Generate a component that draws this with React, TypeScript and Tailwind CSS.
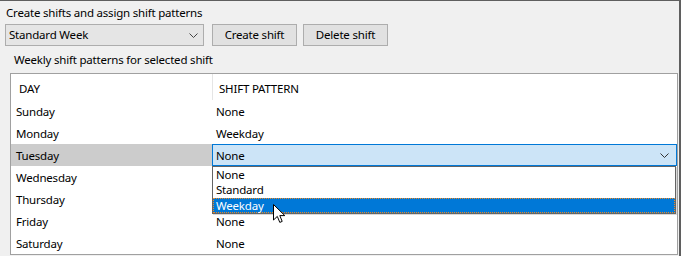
const days = [
  { day: 'Sunday', pattern: 'None' },
  { day: 'Monday', pattern: 'Weekday' },
  { day: 'Tuesday', pattern: 'None', editing: true },
  { day: 'Wednesday', pattern: '' },
  { day: 'Thursday', pattern: '' },
  { day: 'Friday', pattern: 'None' },
  { day: 'Saturday', pattern: 'None' },
]

const options = ['None', 'Standard', 'Weekday']

function Chevron({ color = '#444' }: { color?: string }) {
  return (
    <svg width="9" height="5" viewBox="0 0 9 5">
      <polyline points="0.5,0.5 4.5,4.5 8.5,0.5" fill="none" stroke={color} strokeWidth="1" />
    </svg>
  )
}

function Cursor() {
  return (
    <svg className="absolute left-[59px] top-[5px]" width="13" height="20" viewBox="0 0 13 20">
      <path
        d="M0.5 0.5 L0.5 16 L4.3 12.4 L6.8 18.4 L9.2 17.4 L6.8 11.6 L11.8 11.6 Z"
        fill="#fff"
        stroke="#000"
        strokeWidth="1"
      />
    </svg>
  )
}

export default function App() {
  return (
    <div className="w-[681px] h-[256px] overflow-hidden bg-[#f0f0f0] border-t border-r-2 border-[#5f5f5f] text-[11.5px] tracking-[-0.2px] text-black font-['Segoe_UI','Noto_Sans',sans-serif]">
      <div className="pl-[6px] pt-[3px] h-[23px] leading-[18px]">Create shifts and assign shift patterns</div>

      <div className="flex items-center pl-[5px] gap-[8px] h-[22px]">
        <div className="w-[199px] h-[22px] flex items-center justify-between pl-[3px] pr-[5px] bg-[#e5e5e5] border border-[#adadad]">
          <span>Standard Week</span>
          <Chevron />
        </div>
        <button className="w-[85px] h-[22px] bg-[#e1e1e1] border border-[#adadad] leading-none">Create shift</button>
        <button className="w-[85px] h-[22px] -ml-[2px] bg-[#e1e1e1] border border-[#adadad] leading-none">Delete shift</button>
      </div>

      <div className="pl-[14px] h-[27px] flex items-center pt-[1px]">Weekly shift patterns for selected shift</div>

      <div className="ml-[10px] w-[668px] border border-[#a0a0a0] bg-white">
        <div className="flex h-[26px] items-center">
          <div className="w-[201px] pl-[8px] pt-[3px]">DAY</div>
          <div className="flex-1 h-full flex items-center pl-[6px] pt-[3px] border-l border-[#e5e5e5]">SHIFT PATTERN</div>
        </div>
        {days.map((d) => (
          <div key={d.day} className="flex h-[22px] items-center">
            <div className={`w-[201px] h-full flex items-center pl-[5px] pt-[1px] ${d.editing ? 'bg-[#cccccc]' : ''}`}>
              {d.day}
            </div>
            {d.editing ? (
              <div className="relative flex-1 h-full">
                <div className="h-full flex items-center justify-between pl-[3px] pr-[7px] pt-[1px] bg-[#cce4f7] border border-[#0078d7]">
                  <span>{d.pattern}</span>
                  <Chevron color="#333" />
                </div>
                <div className="absolute left-0 right-[1px] top-[22px] z-10 bg-white border border-[#646464] shadow-[1px_1px_0_rgba(0,0,0,0.15)]">
                  {options.map((o) => (
                    <div
                      key={o}
                      className={
                        o === 'Weekday'
                          ? 'relative h-[15px] leading-[13px] pl-[2px] mt-[1px] bg-[#0078d7] text-white border border-dotted border-[#f08a24]'
                          : 'h-[15px] leading-[15px] pl-[3px]'
                      }
                    >
                      {o}
                      {o === 'Weekday' ? <Cursor /> : null}
                    </div>
                  ))}
                </div>
              </div>
            ) : (
              <div className="flex-1 pl-[4px] pt-[1px]">{d.pattern}</div>
            )}
          </div>
        ))}
      </div>
    </div>
  )
}
